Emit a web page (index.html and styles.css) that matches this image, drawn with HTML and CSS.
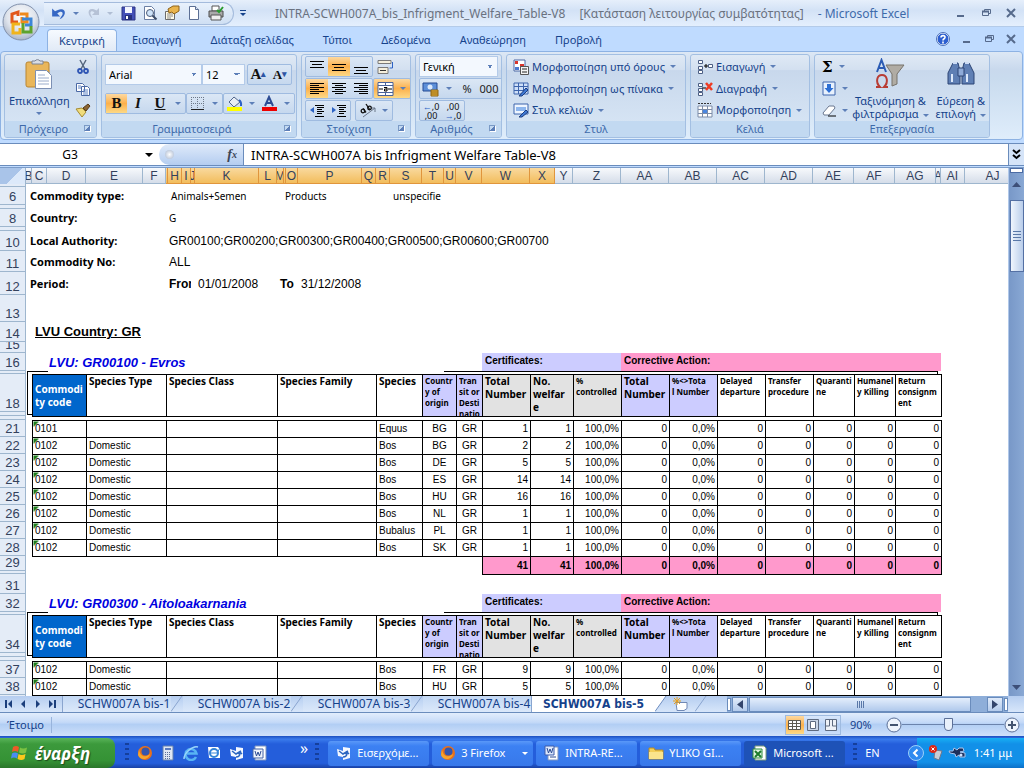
FILE: index.html
```html
<!DOCTYPE html>
<html lang="el">
<head>
<meta charset="utf-8">
<title>INTRA-SCWH007A_bis_Infrigment_Welfare_Table-V8 - Microsoft Excel</title>
<link rel="stylesheet" href="styles.css">
</head>
<body>

<header class="top">
  <button class="office" aria-label="Office">
    <svg width="38" height="38" viewBox="0 0 38 38">
      <defs><radialGradient id="orb" cx="50%" cy="35%" r="65%"><stop offset="0" stop-color="#fff"/><stop offset=".6" stop-color="#dfe4ec"/><stop offset="1" stop-color="#a9b5c8"/></radialGradient></defs>
      <circle cx="19" cy="19" r="18" fill="url(#orb)" stroke="#8291ac"/>
      <g fill="none" stroke-width="3">
        <path d="M16 19H10V11l6-2v4" stroke="#e2581c"/>
        <path d="M18 11h7v8h-5v-5" stroke="#f08a1c"/>
        <path d="M20 16h9v6h-6" stroke="#3d86d6"/>
        <path d="M18 21h-7v9h7v-5" stroke="#f0b41c"/>
        <path d="M21 20v9h8v-6" stroke="#5da32c"/>
      </g>
    </svg>
  </button>

  <div class="titlebar">
    <div class="quick">
      <button aria-label="Αναίρεση"><svg width="16" height="16" viewBox="0 0 14 14"><path d="M1 3v7h7L5.500 7.500C8 5 11 5.500 10 8.500L7.500 12.500C14 10 14 1 5.500 4.500L3.500 5.500z" fill="#3768c4"/></svg></button>
      <i class="dd"></i>
      <button aria-label="Ακύρωση αναίρεσης"><svg width="14" height="14" viewBox="0 0 14 14"><path d="M12 2v7H5l2.500-2.500C5 4.500 3 5 3.500 8L5.500 12.500C0 9 0 1 7.500 3.500L9.500 4.500z" fill="#b6c2d6"/></svg></button>
      <i class="dd pale"></i>
      <button aria-label="Αποθήκευση"><svg width="15" height="15" viewBox="0 0 15 15"><path d="M1 1h13v13H1z" fill="#4450b8" stroke="#2c3484"/><path d="M4 1h7v6H4z" fill="#f4f6ff"/><path d="M4 9h7v5H4z" fill="#26307c"/><path d="M5 10h2v3H5z" fill="#fff"/></svg></button>
      <button aria-label="Προεπισκόπηση"><svg width="16" height="16" viewBox="0 0 16 16"><path d="M2.500 1.500h7l3 3v10h-10z" fill="#fff" stroke="#6b7fa4"/><circle cx="8" cy="8" r="3.500" fill="#cfe4fa" stroke="#4a5a78"/><path d="M10.500 10.500l4 4" stroke="#3c4c68" stroke-width="2"/></svg></button>
      <button aria-label="Ιδιότητες"><svg width="16" height="16" viewBox="0 0 16 16"><path d="M1.500 6.500h9v8h-9z" fill="#fffbe8" stroke="#6b6b6b"/><path d="M3 9h6M3 11h6M3 13h4" stroke="#8b8b8b"/><path d="M4 4l5-3h6v5l-5 3-2-2-3 1z" fill="#e9b44c" stroke="#8f6318"/></svg></button>
      <button aria-label="Δημιουργία"><svg width="16" height="16" viewBox="0 0 16 16"><path d="M3.500 1.500h6l3 3v10h-9z" fill="#fff" stroke="#5c6f94"/><path d="M9.500 1.500v3h3" fill="#dce6f4" stroke="#5c6f94"/></svg></button>
      <button aria-label="Εκτύπωση"><svg width="16" height="16" viewBox="0 0 16 16"><path d="M4 1h7v5H4z" fill="#fff" stroke="#555"/><path d="M1 6h14v6H1z" fill="#a9a9a9" stroke="#4c4c4c"/><path d="M3 10h10v5H3z" fill="#eee" stroke="#555"/><path d="M9 5l2 2 4-5" fill="none" stroke="#2a9b2f" stroke-width="2"/></svg></button>
    </div>
    <button class="more" aria-label="Προσαρμογή"><i class="bar"></i><i class="dd dark"></i></button>
    <h1><span>INTRA-SCWH007A_bis_Infrigment_Welfare_Table-V8</span> <span>[Κατάσταση λειτουργίας συμβατότητας]</span> <b>- Microsoft Excel</b></h1>
    <div class="winbtns">
      <button aria-label="Ελαχιστοποίηση"><svg width="10" height="10"><path d="M1 8h7" stroke="#566a8c" stroke-width="2"/></svg></button>
      <button aria-label="Επαναφορά"><svg width="10" height="10"><path d="M3.500 3V1.500h6v4H8M1.500 3.500h6v4h-6z" fill="none" stroke="#566a8c"/><path d="M1 3.500h7" stroke="#566a8c" stroke-width="2"/></svg></button>
      <button aria-label="Κλείσιμο"><svg width="10" height="10"><path d="M1 1l8 8M9 1L1 9" stroke="#566a8c" stroke-width="2"/></svg></button>
    </div>
  </div>

  <nav class="tabs">
    <button class="tab on">Κεντρική</button>
    <button class="tab">Εισαγωγή</button>
    <button class="tab">Διάταξη σελίδας</button>
    <button class="tab">Τύποι</button>
    <button class="tab">Δεδομένα</button>
    <button class="tab">Αναθεώρηση</button>
    <button class="tab">Προβολή</button>
    <div class="winbtns">
      <button aria-label="Βοήθεια"><svg width="14" height="14" viewBox="0 0 14 14"><circle cx="7" cy="7" r="6" fill="#2d5fd0" stroke="#fff"/><circle cx="7" cy="7" r="6.500" fill="none" stroke="#4a6fb8"/><path d="M5 5.500C5 3 9.500 3 9 5.500 8.800 7 7 6.500 7 8.500M7 9.500v2" fill="none" stroke="#fff" stroke-width="1.600"/></svg></button>
      <button aria-label="Ελαχιστοποίηση"><svg width="10" height="10"><path d="M1 8h7" stroke="#566a8c" stroke-width="2"/></svg></button>
      <button aria-label="Επαναφορά"><svg width="10" height="10"><path d="M3.500 3V1.500h6v4H8M1.500 3.500h6v4h-6z" fill="none" stroke="#566a8c"/><path d="M1 3.500h7" stroke="#566a8c" stroke-width="2"/></svg></button>
      <button aria-label="Κλείσιμο"><svg width="10" height="10"><path d="M1 1l8 8M9 1L1 9" stroke="#566a8c" stroke-width="2"/></svg></button>
    </div>
  </nav>
</header>

<!-- ribbon -->
<section class="ribbon">
  <div class="group g-clip">
    <div class="body">
      <button class="big"><svg width="30" height="32" viewBox="0 0 30 32"><rect x="2" y="4" width="23" height="25" rx="2" fill="#e9b65a" stroke="#b98531"/><path d="M8 6V3h3a3 3 0 0 1 5 0h3v3z" fill="#d9dde4" stroke="#7c8494"/><path d="M11.500 12.500h11l5 5v13h-16z" fill="#fff" stroke="#7c90b4"/><path d="M14 17h7M14 20h11M14 23h11M14 26h11" stroke="#9aaccb"/></svg><span>Επικόλληση</span><i class="dd"></i></button>
      <div class="stack">
        <button aria-label="Αποκοπή"><svg width="14" height="16" viewBox="0 0 14 16"><path d="M4 1l5 9M10 1L5 10" stroke="#56677f" stroke-width="1.500"/><circle cx="4" cy="12" r="2" fill="none" stroke="#2f55b4" stroke-width="1.800"/><circle cx="10" cy="12" r="2" fill="none" stroke="#2f55b4" stroke-width="1.800"/></svg></button>
        <button aria-label="Αντιγραφή"><svg width="16" height="14" viewBox="0 0 16 14"><path d="M1.500 1.500h6l2 2v6h-8zM6.500 4.500h6l2 2v7h-8z" fill="#fff" stroke="#4a68a4"/><path d="M3 4h3M3 6h3M8 8h5M8 10h5M8 12h5" stroke="#5f83c4"/></svg></button>
        <button aria-label="Πινέλο μορφοποίησης"><svg width="16" height="15" viewBox="0 0 16 15"><path d="M1 6l6-1 4 4-4 5z" fill="#f0dc7c" stroke="#a58b32"/><path d="M8 5l5-4 2 2-4 5z" fill="#8a6433" stroke="#573c18"/></svg></button>
      </div>
    </div>
    <h2>Πρόχειρο<i class="launch"></i></h2>
  </div>

  <div class="group g-font">
    <div class="body rows2">
      <div class="line">
        <select class="s-font" aria-label="Γραμματοσειρά"><option>Arial</option></select><select class="s-size" aria-label="Μέγεθος"><option>12</option></select>
        <div class="set push"><button class="serif" aria-label="Αύξηση">A<sup>▴</sup></button><button class="serif small" aria-label="Μείωση">A<sup>▾</sup></button></div>
      </div>
      <div class="line">
        <div class="set"><button class="serif hot">B</button><button class="serif"><em>I</em></button><button class="serif"><u>U</u></button><i class="dd"></i></div>
        <div class="set push"><button aria-label="Περιγράμματα"><svg width="15" height="15"><path d="M1.500 1v13M7.500 1v13M13.500 1v13M1 1.500h13M1 7.500h13" stroke="#6d7888" stroke-dasharray="1 1"/><path d="M1 13.500h13" stroke="#222"/></svg></button><i class="dd"></i></div>
        <div class="set push"><button aria-label="Χρώμα γεμίσματος"><svg width="17" height="17" viewBox="0 0 17 17"><path d="M3 7l5-5 6 5-6 5z" fill="#e8eef6" stroke="#53678c"/><path d="M13 5c3 2 2 4 2 6" stroke="#2d62c4" stroke-width="2" fill="none"/><path d="M1 12h15v4H1z" fill="#ff0"/></svg></button><i class="dd"></i><button aria-label="Χρώμα γραμματοσειράς"><svg width="17" height="17" viewBox="0 0 17 17"><path d="M4 11L8 2l4 9M5.500 8h5" stroke="#2c4c94" stroke-width="2" fill="none"/><path d="M1 12h15v4H1z" fill="#e00"/></svg></button><i class="dd"></i></div>
      </div>
    </div>
    <h2>Γραμματοσειρά<i class="launch"></i></h2>
  </div>

  <div class="group g-align">
    <div class="body rows3">
      <div class="line">
        <div class="set"><button aria-label="Επάνω"><svg width="16" height="16"><path d="M1 2.500h14M3 5.500h10M1 8.500h14" stroke="#000"/></svg></button><button class="hot" aria-label="Μέση"><svg width="16" height="16"><path d="M1 5.500h14M3 8.500h10M1 11.500h14" stroke="#000"/></svg></button><button aria-label="Κάτω"><svg width="16" height="16"><path d="M1 8.500h14M3 11.500h10M1 14.500h14" stroke="#000"/></svg></button></div>
        <button class="near" aria-label="Αναδίπλωση"><svg width="17" height="16" viewBox="0 0 17 16"><path d="M1 1.500h13v3H1zM1 8.500h10v6H1z" fill="#f5efdc" stroke="#7a7a7a"/><path d="M3 11.500h6" stroke="#333"/><path d="M15.500 3v6h-3" fill="none" stroke="#2c62c4"/></svg></button>
      </div>
      <div class="line">
        <div class="set"><button class="hot" aria-label="Αριστερά"><svg width="16" height="16"><path d="M1 2.500h14M1 4.500h9M1 6.500h14M1 8.500h9M1 10.500h14M1 12.500h9" stroke="#000"/></svg></button><button aria-label="Κέντρο"><svg width="16" height="16"><path d="M1 2.500h14M4 4.500h8M1 6.500h14M4 8.500h8M1 10.500h14M4 12.500h8" stroke="#000"/></svg></button><button aria-label="Δεξιά"><svg width="16" height="16"><path d="M1 2.500h14M6 4.500h9M1 6.500h14M6 8.500h9M1 10.500h14M6 12.500h9" stroke="#000"/></svg></button></div>
        <div class="set hot push"><button aria-label="Συγχώνευση"><svg width="17" height="16" viewBox="0 0 17 16"><path d="M1 1.500h15v13H1z" fill="#fff" stroke="#49629a"/><path d="M1 4.500h15M1 11.500h15M8.500 1v3M8.500 12v3" stroke="#49629a"/><path d="M2 8h4M11 8h4" stroke="#000"/><path d="M7 6.500h3v3.500H7.500V8H10" fill="none" stroke="#000"/></svg></button><i class="dd"></i></div>
      </div>
      <div class="line">
        <div class="set"><button aria-label="Μείωση εσοχής"><svg width="16" height="16"><path d="M6 2.500h9M8 4.500h7M8 6.500h5M8 8.500h7M8 10.500h5M6 13.500h9" stroke="#000"/><path d="M5 4L1 7l4 3z" fill="#2c62c4"/></svg></button><button aria-label="Αύξηση εσοχής"><svg width="16" height="16"><path d="M6 2.500h9M8 4.500h7M8 6.500h5M8 8.500h7M8 10.500h5M6 13.500h9" stroke="#000"/><path d="M1 4l4 3-4 3z" fill="#2c62c4"/></svg></button></div>
        <div class="set near"><button aria-label="Προσανατολισμός"><svg width="17" height="16" viewBox="0 0 17 16"><path d="M4 14L16 5m-4 0h4v4" fill="none" stroke="#6b7688"/><g fill="none" stroke="#111" stroke-width="1.300"><circle cx="4" cy="8" r="1.800"/><path d="M4 5.500l3 4"/><path d="M7 1l4 6"/><circle cx="10.500" cy="5" r="1.800"/></g></svg></button><i class="dd"></i></div>
      </div>
    </div>
    <h2>Στοίχιση<i class="launch"></i></h2>
  </div>

  <div class="group g-num">
    <div class="body rows3">
      <div class="line"><select class="s-num" aria-label="Μορφή αριθμού"><option>Γενική</option></select></div>
      <div class="line"><div class="set wide"><button aria-label="Λογιστική"><svg width="18" height="16" viewBox="0 0 18 16"><path d="M1 2h14v8H1z" fill="#5d8fd8" stroke="#244a94"/><circle cx="8" cy="6" r="2.500" fill="#dbe9fb"/><path d="M9 9h7v6H9z" fill="#edb73c" stroke="#8e6413"/><path d="M9 11h7M9 13h7" stroke="#8e6413"/></svg></button><i class="dd"></i><button class="sign">%</button><button class="sign">000</button></div></div>
      <div class="line"><div class="set"><button class="dec" aria-label="Αύξηση δεκαδικών"><span><b>←</b>,0</span><span>,00</span></button><button class="dec" aria-label="Μείωση δεκαδικών"><span>,00</span><span><b>→</b>,0</span></button></div></div>
    </div>
    <h2>Αριθμός<i class="launch"></i></h2>
  </div>

  <div class="group g-style">
    <div class="body list">
      <button class="item"><svg width="16" height="16" viewBox="0 0 16 16"><path d="M1 1h11v11H1z" fill="#fff" stroke="#4c68a4"/><path d="M2 2h3v3H2zM7 5h4v3H7z" fill="#d8342c"/><path d="M2 8h4v3H2z" fill="#4a78d0"/><path d="M7.500 7.500h8v8h-8z" fill="#f4f4f4" stroke="#555"/><path d="M9 10h5M9 13h5" stroke="#222"/></svg>Μορφοποίηση υπό όρους<i class="dd"></i></button>
      <button class="item"><svg width="16" height="16" viewBox="0 0 16 16"><path d="M1 2h14v11H1z" fill="#cfe0f8" stroke="#3d64ac"/><path d="M1 5.500h14M1 9.500h14M5.500 2v11M10.500 2v11" stroke="#3d64ac"/><path d="M6 15l7-8 2 2-6 6z" fill="#3f79d4" stroke="#1c3d80"/></svg>Μορφοποίηση ως πίνακα<i class="dd"></i></button>
      <button class="item"><svg width="16" height="16" viewBox="0 0 16 16"><path d="M1 2h14v10H1z" fill="#eef5ff" stroke="#3d64ac"/><path d="M3 5h10v4H3z" fill="#8db6ee"/><path d="M6 15l7-7 2 2-6 5z" fill="#3f79d4" stroke="#1c3d80"/></svg>Στυλ κελιών<i class="dd"></i></button>
    </div>
    <h2>Στυλ</h2>
  </div>

  <div class="group g-cells">
    <div class="body list">
      <button class="item"><svg width="16" height="16" viewBox="0 0 16 16"><path d="M1.500 1.500h4v3h-4zM1.500 7.500h4v3h-4zM1.500 11.500h4v3h-4zM11.500 5.500h4v3h-4z" fill="#fff" stroke="#4c5f84"/><path d="M7 7h4M9 5v4" stroke="#000"/></svg>Εισαγωγή<i class="dd"></i></button>
      <button class="item"><svg width="16" height="16" viewBox="0 0 16 16"><path d="M1.500 2.500h4v3h-4zM1.500 7.500h4v3h-4zM1.500 11.500h4v3h-4z" fill="#fff" stroke="#4c5f84"/><path d="M5 7h4" stroke="#000"/><path d="M9 2l6 7M15 2L9 9" stroke="#ee3b24" stroke-width="2.500"/></svg>Διαγραφή<i class="dd"></i></button>
      <button class="item"><svg width="16" height="16" viewBox="0 0 16 16"><path d="M1 1.500h13" stroke="#333" stroke-dasharray="2 1"/><path d="M1 4h14v11H1z" fill="#fff" stroke="#7c8ca8"/><path d="M1 7.500h14M1 11.500h14M5.500 4v11M10.500 4v11" stroke="#7c8ca8"/><path d="M6 8h4v3H6z" fill="#4a86e0"/></svg>Μορφοποίηση<i class="dd"></i></button>
    </div>
    <h2>Κελιά</h2>
  </div>

  <div class="group g-edit">
    <div class="body">
      <div class="list">
        <button class="item sigma">Σ<i class="dd"></i></button>
        <button class="item"><svg width="14" height="15" viewBox="0 0 14 15"><path d="M1 1h12v13H1z" fill="#e8f1fd" stroke="#3d64ac"/><path d="M5 3h4v4h2.500L7 12 2.500 7H5z" fill="#2d6fd4"/></svg><i class="dd"></i></button>
        <button class="item"><svg width="14" height="15" viewBox="0 0 14 15"><path d="M1 10l6-7h5l1 2-6 7H2z" fill="#fff" stroke="#6b7890"/><path d="M6 13h8" stroke="#000"/></svg><i class="dd"></i></button>
      </div>
      <button class="big"><svg width="30" height="32" viewBox="0 0 30 32"><path d="M11 7h18l-7 9v10l-5 2V16z" fill="#b0aca4" stroke="#77736b"/><path d="M2 14L6.500 2 11 14M3.500 10h6" fill="none" stroke="#2c5cb4" stroke-width="2"/><path d="M1 29h4c-5-5-3-12 2-12s7 7 2 12h4" fill="none" stroke="#b83c34" stroke-width="2"/></svg><span>Ταξινόμηση &amp;<br>φιλτράρισμα<i class="dd"></i></span></button>
      <button class="big"><svg width="30" height="32" viewBox="0 0 30 32"><g fill="#5f7fb4" stroke="#2c4474"><path d="M7 5h5l2 8v13H2V15zM18 5h5l5 10v11H16V13z"/><path d="M12 10h6v8h-6z" fill="#8eaad8"/></g><path d="M5 16h2v8H5zM20 16h2v8h-2z" fill="#dce8fa"/><path d="M7 5h4M19 5h4" stroke="#cddcf4" stroke-width="2"/></svg><span>Εύρεση &amp;<br>επιλογή<i class="dd"></i></span></button>
    </div>
    <h2>Επεξεργασία</h2>
  </div>
</section>

<div class="formula">
  <input class="namebox" value="G3" aria-label="Πλαίσιο ονόματος">
  <i class="dd black"></i>
  <div class="knob"><i></i><button>f<sub>x</sub></button></div>
  <input class="fx" value="INTRA-SCWH007A bis Infrigment Welfare Table-V8" aria-label="Γραμμή τύπων">
  <button class="expand" aria-label="Ανάπτυξη"><svg width="9" height="11"><path d="M1 1l3.500 3L8 1M1 6l3.500 3L8 6" fill="none" stroke="#000" stroke-width="2"/></svg></button>
</div>

<main class="book">
  <div class="rownums">
    <button class="corner" aria-label="Επιλογή όλων"></button>
    <div class="h3"></div><div class="h18">6</div><div class="h4"></div><div class="h18">8</div><div class="h4"></div><div class="h20">10</div><div class="h21">11</div><div class="h23">12</div><div class="h27">13</div><div class="h20">14</div><div class="h11">15</div>
    <div class="h18">16</div><div class="h3"></div><div class="h38">18</div><div class="h4"></div><div class="h4"></div>
    <div class="h17">21</div><div class="h17">22</div><div class="h17">23</div><div class="h17">24</div><div class="h17">25</div><div class="h17">26</div><div class="h17">27</div><div class="h17">28</div><div class="h15">29</div><div class="h3"></div><div class="h20">31</div>
    <div class="h18">32</div><div class="h3"></div><div class="h38">34</div><div class="h4"></div><div class="h4"></div><div class="h17">37</div><div class="h17">38</div>
  </div>

  <div class="grid">
    <div class="cols">
      <span style="width:6px">B</span><span style="width:15px">C</span><span style="width:39px">D</span><span style="width:57px">E</span><span style="width:23px">F</span><b style="width:2px"></b><b style="width:14px">H</b><b style="width:9px">I</b><b style="width:4px">J</b><b style="width:64px">K</b><b style="width:18px">L</b><b style="width:7px">M</b><b style="width:2px"></b><b style="width:12px">O</b><b style="width:64px">P</b><b style="width:14px">Q</b><b style="width:14px">R</b><b style="width:32px">S</b><b style="width:22px">T</b><b style="width:12px">U</b><b style="width:26px">V</b><b style="width:48px">W</b><b style="width:25px">X</b><span style="width:18px">Y</span><span style="width:48px">Z</span><span style="width:48px">AA</span><span style="width:48px">AB</span><span style="width:48px">AC</span><span style="width:48px">AD</span><span style="width:41px">AE</span><span style="width:41px">AF</span><span style="width:41px">AG</span><span style="width:5px">A</span><span style="width:24px">AI</span><span class="last">AJ</span>
    </div>

    <div class="info">
      <div class="h3"></div>
      <div class="r h18"><b>Commodity type:</b><small class="a">Animals+Semen</small><small class="p">Products</small><small>unspecifie</small></div>
      <div class="h4"></div>
      <div class="r h18"><b>Country:</b><small>G</small></div>
      <div class="h4"></div>
      <div class="r h20"><b>Local Authority:</b><span>GR00100;GR00200;GR00300;GR00400;GR00500;GR00600;GR00700</span></div>
      <div class="r h21"><b>Commodity No:</b><span>ALL</span></div>
      <div class="r h23"><b>Period:</b><strong class="from">From</strong><span class="d">01/01/2008</span><strong class="to">To</strong><span>31/12/2008</span></div>
      <div class="h27"></div>
      <h2 class="h20">LVU Country: GR</h2>
      <div class="h11"></div>
    </div>

    <section class="lvu">
      <div class="band"><h3>LVU: GR00100 - Evros</h3><div class="cert">Certificates:</div><div class="corr">Corrective Action:</div></div>
      <table>
        <colgroup><col class="w54"><col class="w80"><col class="w111"><col class="w99"><col class="w46"><col class="w34"><col class="w26"><col class="w48"><col class="w43"><col class="w48"><col class="w48"><col class="w48"><col class="w48"><col class="w48"><col class="w41"><col class="w41"><col class="w46"></colgroup>
        <thead>
          <tr><th class="blue">Commodi<br>ty code</th><th>Species Type</th><th>Species Class</th><th>Species Family</th><th>Species</th><th class="lilac sm"><div>Countr<br>y of<br>origin</div></th><th class="lilac sm"><div>Tran<br>sit or<br>Desti<br>natio</div></th><th class="grey">Total<br>Number</th><th class="grey">No.<br>welfar<br>e</th><th class="grey sm">%<br>controlled</th><th class="lilac">Total<br>Number</th><th class="lilac sm">%&lt;&gt;Tota<br>l Number</th><th class="sm">Delayed<br>departure</th><th class="sm">Transfer<br>procedure</th><th class="sm">Quaranti<br>ne</th><th class="sm">Humanel<br>y Killing</th><th class="sm">Return<br>consignm<br>ent</th></tr>
        </thead>
        <tbody>
          <tr class="gap"><td colspan="17"></td></tr>
          <tr><td>0101</td><td></td><td></td><td></td><td>Equus</td><td>BG</td><td>GR</td><td>1</td><td>1</td><td>100,0%</td><td>0</td><td>0,0%</td><td>0</td><td>0</td><td>0</td><td>0</td><td>0</td></tr>
          <tr><td>0102</td><td>Domestic</td><td></td><td></td><td>Bos</td><td>BG</td><td>GR</td><td>2</td><td>2</td><td>100,0%</td><td>0</td><td>0,0%</td><td>0</td><td>0</td><td>0</td><td>0</td><td>0</td></tr>
          <tr><td>0102</td><td>Domestic</td><td></td><td></td><td>Bos</td><td>DE</td><td>GR</td><td>5</td><td>5</td><td>100,0%</td><td>0</td><td>0,0%</td><td>0</td><td>0</td><td>0</td><td>0</td><td>0</td></tr>
          <tr><td>0102</td><td>Domestic</td><td></td><td></td><td>Bos</td><td>ES</td><td>GR</td><td>14</td><td>14</td><td>100,0%</td><td>0</td><td>0,0%</td><td>0</td><td>0</td><td>0</td><td>0</td><td>0</td></tr>
          <tr><td>0102</td><td>Domestic</td><td></td><td></td><td>Bos</td><td>HU</td><td>GR</td><td>16</td><td>16</td><td>100,0%</td><td>0</td><td>0,0%</td><td>0</td><td>0</td><td>0</td><td>0</td><td>0</td></tr>
          <tr><td>0102</td><td>Domestic</td><td></td><td></td><td>Bos</td><td>NL</td><td>GR</td><td>1</td><td>1</td><td>100,0%</td><td>0</td><td>0,0%</td><td>0</td><td>0</td><td>0</td><td>0</td><td>0</td></tr>
          <tr><td>0102</td><td>Domestic</td><td></td><td></td><td>Bubalus</td><td>PL</td><td>GR</td><td>1</td><td>1</td><td>100,0%</td><td>0</td><td>0,0%</td><td>0</td><td>0</td><td>0</td><td>0</td><td>0</td></tr>
          <tr><td>0102</td><td>Domestic</td><td></td><td></td><td>Bos</td><td>SK</td><td>GR</td><td>1</td><td>1</td><td>100,0%</td><td>0</td><td>0,0%</td><td>0</td><td>0</td><td>0</td><td>0</td><td>0</td></tr>
        </tbody>
        <tfoot>
          <tr><td class="none" colspan="7"></td><td>41</td><td>41</td><td>100,0%</td><td>0</td><td>0,0%</td><td>0</td><td>0</td><td>0</td><td>0</td><td>0</td></tr>
        </tfoot>
      </table>
    </section>

    <section class="lvu">
      <div class="band"><h3>LVU: GR00300 - Aitoloakarnania</h3><div class="cert">Certificates:</div><div class="corr">Corrective Action:</div></div>
      <table>
        <colgroup><col class="w54"><col class="w80"><col class="w111"><col class="w99"><col class="w46"><col class="w34"><col class="w26"><col class="w48"><col class="w43"><col class="w48"><col class="w48"><col class="w48"><col class="w48"><col class="w48"><col class="w41"><col class="w41"><col class="w46"></colgroup>
        <thead>
          <tr><th class="blue">Commodi<br>ty code</th><th>Species Type</th><th>Species Class</th><th>Species Family</th><th>Species</th><th class="lilac sm"><div>Countr<br>y of<br>origin</div></th><th class="lilac sm"><div>Tran<br>sit or<br>Desti<br>natio</div></th><th class="grey">Total<br>Number</th><th class="grey">No.<br>welfar<br>e</th><th class="grey sm">%<br>controlled</th><th class="lilac">Total<br>Number</th><th class="lilac sm">%&lt;&gt;Tota<br>l Number</th><th class="sm">Delayed<br>departure</th><th class="sm">Transfer<br>procedure</th><th class="sm">Quaranti<br>ne</th><th class="sm">Humanel<br>y Killing</th><th class="sm">Return<br>consignm<br>ent</th></tr>
        </thead>
        <tbody>
          <tr class="gap"><td colspan="17"></td></tr>
          <tr><td>0102</td><td>Domestic</td><td></td><td></td><td>Bos</td><td>FR</td><td>GR</td><td>9</td><td>9</td><td>100,0%</td><td>0</td><td>0,0%</td><td>0</td><td>0</td><td>0</td><td>0</td><td>0</td></tr>
          <tr><td>0102</td><td>Domestic</td><td></td><td></td><td>Bos</td><td>HU</td><td>GR</td><td>5</td><td>5</td><td>100,0%</td><td>0</td><td>0,0%</td><td>0</td><td>0</td><td>0</td><td>0</td><td>0</td></tr>
        </tbody>
      </table>
    </section>
  </div>

  <div class="vscroll">
    <i class="split"></i>
    <button aria-label="Πάνω"><svg width="9" height="5"><path d="M0 5l4.500-5L9 5z" fill="#3d4f78"/></svg></button>
    <div class="thumb"></div>
    <button class="down" aria-label="Κάτω"><svg width="9" height="5"><path d="M0 0l4.500 5L9 0z" fill="#3d4f78"/></svg></button>
  </div>
</main>

<div class="sheetbar">
  <div class="nav">
    <button aria-label="Πρώτο"><svg width="8" height="8"><path d="M1 0v8" stroke="#1c3f7c" stroke-width="2"/><path d="M7 0v8L3 4z" fill="#1c3f7c"/></svg></button>
    <button aria-label="Προηγούμενο"><svg width="8" height="8"><path d="M6 0v8L2 4z" fill="#1c3f7c"/></svg></button>
    <button aria-label="Επόμενο"><svg width="8" height="8"><path d="M2 0v8l4-4z" fill="#1c3f7c"/></svg></button>
    <button aria-label="Τελευταίο"><svg width="8" height="8"><path d="M7 0v8" stroke="#1c3f7c" stroke-width="2"/><path d="M1 0v8l4-4z" fill="#1c3f7c"/></svg></button>
  </div>
  <button class="sheet">SCHW007A bis-1</button>
  <svg class="slant" width="12" height="16"><path d="M0 15.500L11 0" stroke="#8aa5cf" fill="none"/></svg>
  <button class="sheet">SCHW007A bis-2</button>
  <svg class="slant" width="12" height="16"><path d="M0 15.500L11 0" stroke="#8aa5cf" fill="none"/></svg>
  <button class="sheet">SCHW007A bis-3</button>
  <svg class="slant" width="12" height="16"><path d="M0 15.500L11 0" stroke="#8aa5cf" fill="none"/></svg>
  <button class="sheet">SCHW007A bis-4</button>
  <button class="sheet on">SCHW007A bis-5</button>
  <svg class="slant" width="12" height="16"><path d="M0 0h11L0 16z" fill="#fff"/><path d="M0 15.500L11 0" stroke="#6b8cc0" fill="none"/></svg>
  <button class="new" aria-label="Εισαγωγή φύλλου"><svg width="18" height="14" viewBox="0 0 18 14"><path d="M4 5.500h11v6l-3 2H5z" fill="#fff" stroke="#7088b4"/><path d="M5 0v8M1 4h8M2 1l6 6M8 1L2 7" stroke="#e8a01c"/></svg></button>
  <svg class="slant" width="12" height="16"><path d="M0 15.500L11 0" stroke="#8aa5cf" fill="none"/></svg>
  <div class="hscroll">
    <i class="grip"></i>
    <button aria-label="Αριστερά"><svg width="6" height="9"><path d="M6 0v9L0 4.500z" fill="#33456c"/></svg></button>
    <div class="track"><div class="thumb"></div></div>
    <button aria-label="Δεξιά"><svg width="6" height="9"><path d="M0 0v9l6-4.500z" fill="#33456c"/></svg></button>
    <i class="grip"></i>
  </div>
</div>

<footer class="status">
  <span class="ready">Έτοιμο</span>
  <div class="views">
    <button class="hot" aria-label="Κανονική"><svg width="14" height="12"><path d="M.5 1.500h12v9H.5zM.5 4.500h12M.5 7.500h12M4.500 1.500v9M8.500 1.500v9" fill="#fff" stroke="#5d5a50"/></svg></button>
    <button aria-label="Διάταξη σελίδας"><svg width="14" height="12"><path d="M1.500.5h11v11h-11z" fill="#c8d4e6" stroke="#5d6a80"/><path d="M4.500 2.500h5v7h-5z" fill="#fff" stroke="#5d6a80"/></svg></button>
    <button aria-label="Αλλαγές σελίδων"><svg width="14" height="12"><path d="M1.500.5h11v11h-11z" fill="#eef2f8" stroke="#5d6a80"/><path d="M5.500 0v7h-4M8.500 0v7h4" fill="none" stroke="#5d6a80"/></svg></button>
  </div>
  <label for="zoom">90%</label>
  <button class="round" aria-label="Σμίκρυνση"><svg width="16" height="16"><circle cx="8" cy="8" r="7" fill="#eef4fc" stroke="#5c7098"/><path d="M4 8h8" stroke="#44546f" stroke-width="2"/></svg></button>
  <input id="zoom" type="range" min="0" max="100" value="45">
  <button class="round" aria-label="Μεγέθυνση"><svg width="16" height="16"><circle cx="8" cy="8" r="7" fill="#eef4fc" stroke="#5c7098"/><path d="M4 8h8M8 4v8" stroke="#44546f" stroke-width="2"/></svg></button>
</footer>

<nav class="taskbar">
  <button class="start"><svg width="18" height="18" viewBox="0 0 18 18"><path d="M2 3q3-2 6 0L7 8q-3-2-6 0z" fill="#ee5a28"/><path d="M9 3.500q3 2 7 0l-1 5q-3 2-7 0z" fill="#7cc242"/><path d="M1 9.500q3-2 6 0l-1 5q-3-2-6 0z" fill="#4a8cf0"/><path d="M7.500 10q3 2 7 0l-1 5q-3 2-7 0z" fill="#fcc81c"/></svg>έναρξη</button>
  <i class="dots"></i>
  <div class="launchers">
    <button aria-label="Firefox"><svg width="16" height="16" viewBox="0 0 16 16"><circle cx="8" cy="8" r="7" fill="#e8701c"/><circle cx="8.500" cy="6.500" r="4" fill="#3656ac"/><path d="M2 4c1 8 6 9 11 5-1 6-10 7-12 1z" fill="#f6a52c"/></svg></button>
    <button aria-label="Αριθμομηχανή"><svg width="16" height="16" viewBox="0 0 16 16"><path d="M3 1h10v14H3z" fill="#dfe7f4" stroke="#6480ac"/><path d="M5 3h6v2H5z" fill="#5c7cc0"/><path d="M5 7.500h6M5 9.500h6M5 11.500h6M5 13.500h6" stroke="#5a6f98" stroke-dasharray="1 1"/></svg></button>
    <button aria-label="Internet Explorer"><svg width="16" height="16" viewBox="0 0 16 16"><path d="M13 12A5.500 5.500 0 1 1 13.500 8.500H4" fill="none" stroke="#58b4f4" stroke-width="2.500"/><path d="M1 14C1 8 10 0 15 2" fill="none" stroke="#9ad4fa" stroke-width="1.500"/></svg></button>
    <button aria-label="Outlook Express"><svg width="16" height="16" viewBox="0 0 16 16"><path d="M2 2h10l2 3v8H3z" fill="#fff"/><circle cx="8" cy="8" r="4" fill="none" stroke="#3484d8" stroke-width="2"/><path d="M5 8h6l3-5" stroke="#3484d8" fill="none"/></svg></button>
    <button aria-label="Outlook"><svg width="16" height="16" viewBox="0 0 16 16"><path d="M1 4l6 2V2l7 1v10l-7 2v-3l-5-1z" fill="#f4f8ff"/><path d="M3 6l4 3 5-3M7 12c3 0 4-2 4-4M9 9l2-2 2 2" stroke="#2c66c0" stroke-width="1.500" fill="none"/></svg></button>
    <button aria-label="Word"><svg width="16" height="16" viewBox="0 0 16 16"><path d="M3 1h11v14H3z" fill="#fff" stroke="#7c94c0"/><path d="M1 4h10v9H1z" fill="#f0f4fc" stroke="#4464a8"/><path d="M3 6l1.500 5L6 7l1.500 4L9 6" fill="none" stroke="#2c4c94"/></svg></button>
  </div>
  <span class="chev">»</span>
  <i class="dots"></i>
  <button class="task"><svg width="16" height="16" viewBox="0 0 16 16"><path d="M1 4l6 2V2l7 1v10l-7 2v-3l-5-1z" fill="#f4f8ff"/><path d="M3 6l4 3 5-3M7 12c3 0 4-2 4-4M9 9l2-2 2 2" stroke="#2c66c0" stroke-width="1.500" fill="none"/></svg>Εισερχόμε...</button>
  <button class="task"><svg width="16" height="16" viewBox="0 0 16 16"><circle cx="8" cy="8" r="7" fill="#e8701c"/><circle cx="8.500" cy="6.500" r="4" fill="#3656ac"/><path d="M2 4c1 8 6 9 11 5-1 6-10 7-12 1z" fill="#f6a52c"/></svg>3 Firefox<i class="dd white"></i></button>
  <button class="task"><svg width="16" height="16" viewBox="0 0 16 16"><path d="M4 2h10v13H4z" fill="#fff" stroke="#7c94c0"/><path d="M1 1h9v9H1z" fill="#dce8fc" stroke="#3c5cac"/><path d="M3 3l1.500 5L6 4l1.500 4L9 3M6 12h6" fill="none" stroke="#2c4c94"/></svg>INTRA-RE...</button>
  <button class="task"><svg width="16" height="16" viewBox="0 0 16 16"><path d="M1 3h5l1 2h8v9H1z" fill="#f4cf58" stroke="#b48a24"/><path d="M1 7h14v7H1z" fill="#fbe48c"/></svg>YLIKO GI...</button>
  <button class="task on"><svg width="16" height="16" viewBox="0 0 16 16"><path d="M3 1h9l2 2v12H3z" fill="#fff" stroke="#7a9c7a"/><path d="M1 4h9v9H1z" fill="#e2f4e2" stroke="#2c8c3c"/><path d="M3 6l6 6M9 6l-6 6" stroke="#1c7c2c" stroke-width="2"/></svg>Microsoft ...</button>
  <i class="dots"></i>
  <span class="lang">EN</span>
  <div class="tray">
    <button aria-label="Εμφάνιση κρυφών"><svg width="16" height="16"><circle cx="8" cy="8" r="7.500" fill="#2f8af0" stroke="#9cd0fa"/><path d="M9.500 4.500L6 8l3.500 3.500" fill="none" stroke="#fff" stroke-width="2"/></svg></button>
    <svg width="16" height="16" viewBox="0 0 16 16"><path d="M7 5l7 1-3 9-5-2z" fill="#c8ccd4" stroke="#70788c"/><circle cx="5" cy="4" r="4" fill="#dc2818"/><path d="M3.500 2.500l3 3M6.500 2.500l-3 3" stroke="#fff"/></svg>
    <svg width="18" height="14" viewBox="0 0 18 14"><path d="M1 5h4l1-3 3 2 2-2h4l1 3-4 1 5 1v4h-5l-1-2-3 2-1-3-5-1z" fill="#1c2f5c" stroke="#a8c4ec"/><circle cx="13" cy="9" r="1.500" fill="#cfe2ff"/></svg>
    <time>1:41 μμ</time>
  </div>
</nav>

</body>
</html>
```
FILE: styles.css
```css
* { box-sizing: border-box; }

html, body { height: 100%; }

body {
	margin: 0;
	display: flex;
	flex-direction: column;
	overflow: hidden;
	font: 12px/16px "Noto Sans", "Open Sans", sans-serif;
	color: #15428b;
	background: #bfdbff;
}

button {
	font: inherit;
	color: inherit;
	background: none;
	border: 0;
	padding: 0;
	display: flex;
	align-items: center;
	justify-content: center;
	white-space: nowrap;
}
svg { display: block; flex: none; }
h1, h2, h3 { margin: 0; font: inherit; }
input, select { font: inherit; margin: 0; border-radius: 0; }

/* little drop-down arrow */
.dd {
	flex: none;
	border: 3px solid transparent;
	border-top-color: #5d7fb8;
	border-bottom: 0;
	margin: 0 4px;
}
.dd.pale { border-top-color: #b0bed4; }
.dd.dark { border-top-color: #15428b; margin: 0; }
.dd.white { border-top-color: #fff; margin: 0 0 0 auto; }
.dd.black { border-width: 4px 4px 0; border-top-color: #000; margin: 0 6px 0 0; }

/* title bar and tabs */
.top { position: relative; }
.office { position: absolute; left: 2px; top: 3px; z-index: 2; }
.titlebar {
	height: 27px;
	display: flex;
	align-items: center;
	padding: 0 8px 0 44px;
	background: linear-gradient(#e6effb, #d3e2f6 40%, #e4effd);
	border-bottom: 1px solid #b4cbe9;
}
.quick {
	display: flex;
	align-items: center;
	height: 23px;
	gap: 6px;
	padding: 0 9px 0 7px;
	border: 1px solid #a4bbdc;
	border-left: 0;
	border-radius: 0 12px 12px 0;
	background: linear-gradient(#e8f1fc, #cfdff3);
}
.quick .dd { margin: 0 2px 0 0; }
.more { flex-direction: column; gap: 2px; margin: 0 29px 0 6px; }
.more .bar { width: 6px; height: 1px; background: #15428b; }
.titlebar h1 { flex: 1; display: flex; gap: 14px; color: #6a7280; white-space: nowrap; padding-top: 2px; }
.titlebar h1 b { font-weight: normal; color: #3e6aaa; }
.winbtns { display: flex; gap: 15px; }

.tabs {
	display: flex;
	height: 24px;
	padding: 0 8px 0 47px;
	font-size: 11px;
}
.tab { padding: 0 14px 0 15px; margin-top: 2px; }
.tab.on {
	padding: 0;
	border: 1px solid #8db2e3;
	border-bottom: 0;
	border-radius: 4px 4px 0 0;
	background: linear-gradient(#f6faff, #e1eaf6);
	width: 70px;
}
.tabs .winbtns { margin-left: auto; align-items: center; gap: 12px; }

/* ribbon */
.ribbon {
	display: flex;
	gap: 4px;
	margin: 0 1px 0 0;
	padding: 2px 3px;
	height: 89px;
	border: 1px solid #8db2e3;
	border-radius: 4px;
	background: linear-gradient(#dde8f5, #c9d9ed 20%, #c9dbee 30%, #dfedfb);
	font-size: 11px;
}
.group {
	display: flex;
	flex-direction: column;
	height: 84px;
	border: 1px solid #a3bfe2;
	border-radius: 3px;
	overflow: hidden;
	background: linear-gradient(#dfe9f5, #d3e0f0 18%, #c8d8ec 19%, #d9e7f6);
}
.group h2 {
	position: relative;
	height: 16px;
	line-height: 15px;
	text-align: center;
	color: #3e6aaa;
	background: #c2d9f1;
}
.g-clip { width: 93px; }
.g-font { width: 196px; }
.g-align { width: 110px; }
.g-num { width: 87px; }
.g-style { width: 180px; }
.g-cells { width: 120px; }
.g-edit { width: 176px; }
.g-clip h2, .g-font h2, .g-align h2, .g-num h2 { padding-right: 14px; }
.launch {
	position: absolute;
	right: 5px;
	top: 4px;
	width: 7px;
	height: 7px;
	border: 1px solid #7a9ac6;
	border-right-color: #fff;
	border-bottom-color: #fff;
	background: linear-gradient(135deg, transparent 45%, #5d7fb8 46%);
}
.body { flex: 1; display: flex; min-height: 0; }
.big { flex-direction: column; justify-content: flex-start; padding: 3px 3px 0 4px; }
.big span { line-height: 13px; padding-top: 4px; }
.big .dd { display: inline-block; vertical-align: middle; margin: 0 0 0 4px; }
.g-clip .big .dd { margin: 5px 0 0; }
.stack { display: flex; flex-direction: column; justify-content: space-around; padding-left: 2px; }
.rows2 { flex-direction: column; gap: 8px; padding: 9px 4px 0 3px; }
.rows3 { flex-direction: column; gap: 1px; padding: 1px 3px 0; }
.line { display: flex; height: 21px; align-items: stretch; }
.push { margin-left: auto; }
.near { margin-left: 4px; }
.set {
	display: flex;
	align-items: center;
	border: 1px solid #9fbbe0;
	border-radius: 2px;
	background: linear-gradient(#dbe7f5, #c6d8ee);
}
.set button { height: 100%; min-width: 22px; }
.set.wide { flex: 1; justify-content: space-between; padding-right: 3px; }
.hot, .set.hot { background: linear-gradient(#fdd9a0, #fcb04c 50%, #fdd986); }
.sign { color: #222; }
.serif { font: bold 15px "Liberation Serif", serif; color: #111; }
.serif.small { font-size: 13px; }
.serif sup { font-size: 9px; line-height: 9px; color: #2d55a4; vertical-align: 7px; }
.g-font .set button { min-width: 21px; }
.g-font .set button + button { min-width: 22px; }
.g-font .dd { margin: 0 4px; }
.dec { flex-direction: column; font-size: 9px; line-height: 9px; color: #111; }
.dec b { color: #2c62c4; }

select {
	appearance: none;
	border: 1px solid #b4cbe9;
	color: #000;
	padding: 0 3px;
	background:
		linear-gradient(45deg, transparent 50%, #5d7fb8 50%) right 7px center / 3px 3px no-repeat,
		linear-gradient(-45deg, transparent 50%, #5d7fb8 50%) right 4px center / 3px 3px no-repeat,
		#f3f8fe;
}
.s-font { width: 97px; }
.s-size { width: 43px; }
.s-num { width: 79px; }

.list { display: flex; flex-direction: column; padding: 1px 4px 0 6px; }
.item { height: 22px; gap: 3px; justify-content: flex-start; }
.item .dd { margin: 0 0 0 2px; }
.g-edit .list { width: 34px; padding: 1px 0 0 7px; }
.g-edit .item { gap: 4px; }
.sigma { font: bold 15px "DejaVu Serif", serif; color: #000; }

/* formula bar */
.formula {
	display: flex;
	align-items: center;
	height: 23px;
	margin-top: 3px;
	border: solid #6a8cbc;
	border-width: 1px 0;
	background: #fff;
	font-size: 13px;
}
.namebox { width: 148px; flex: none; border: 0; text-align: center; font-size: 12px; padding: 0 8px 0 0; }
.formula .dd { margin-left: -3px; }
.knob {
	display: flex;
	align-items: center;
	justify-content: space-between;
	width: 85px;
	height: 21px;
	padding: 0 6px;
	border-right: 1px solid #6a8cbc;
	border-radius: 11px 0 0 11px;
	background: linear-gradient(#dfeafa, #b4cdf0);
}
.knob i { width: 9px; height: 9px; border-radius: 50%; background: radial-gradient(#fff, #a5b4cc); }
.knob button { font: italic bold 14px "Liberation Serif", serif; color: #3c4658; }
.knob sub { font-size: 10px; }
.fx { flex: 1; border: 0; padding: 0 7px; color: #000; }
.expand { width: 16px; height: 21px; border-left: 1px solid #6a8cbc; background: #d5e4f8; }

/* worksheet */
.book {
	flex: 1;
	min-height: 0;
	display: flex;
	margin-top: 1px;
	border-top: 1px solid #7c9cc8;
	background: #fff;
	font-family: "Liberation Sans", Arial, sans-serif;
	color: #000;
}
.rownums {
	width: 26px;
	flex: none;
	overflow: hidden;
	border-right: 1px solid #9eb6ce;
	background: #e4ecf7;
	color: #33415c;
	font-size: 13px;
}
.rownums div {
	display: flex;
	align-items: flex-end;
	justify-content: center;
	overflow: hidden;
	line-height: 14px;
	border-bottom: 1px solid #9eb6ce;
}
.corner { width: 100%; height: 16px; background: linear-gradient(135deg, #a9c4e9 55%, #dce9fa 56%); }
.h3 { height: 3px; }
.h4 { height: 4px; }
.h11 { height: 11px; }
.h15 { height: 15px; }
.h17 { height: 17px; }
.h18 { height: 18px; }
.h20 { height: 20px; }
.h21 { height: 21px; }
.h23 { height: 23px; }
.h27 { height: 27px; }
.h38 { height: 38px; }

.grid { flex: 1; min-width: 0; overflow: hidden; }
.cols { display: flex; height: 16px; color: #33415c; line-height: 16px; }
.cols span, .cols b {
	flex: none;
	overflow: hidden;
	display: flex;
	justify-content: center;
	font-weight: normal;
	border-right: 1px solid #9eb6ce;
	background: linear-gradient(#f7f9fc, #d5dde9);
	border-bottom: 1px solid #9eb6ce;
}
.cols b { border-color: #e0953c; background: linear-gradient(#f9d99f, #f2bd5c); }
.cols .last { flex: 1; min-width: 43px; padding-left: 12px; border-right: 0; }

.r { display: flex; align-items: center; white-space: nowrap; }
.r b { width: 139px; margin-left: 4px; font-family: "Noto Sans", sans-serif; font-size: 11px; }
.r b + * { flex: none; }
.r small { font: 10px/14px "Noto Sans", sans-serif; }
.r .a { width: 114px; padding-left: 2px; }
.r .p { width: 110px; padding-left: 2px; }
.from { width: 22px; overflow: hidden; }
.d { width: 89px; padding-left: 7px; }
.to { width: 21px; }
.info h2 { font-size: 13px; font-weight: bold; line-height: 20px; padding-left: 9px; text-decoration: underline; }

.lvu { position: relative; margin-bottom: 19px; }
.lvu::before, .lvu::after { content: ""; position: absolute; top: 18px; border: 1px solid #000; }
.lvu::before { left: 1px; width: 20px; height: 42px; border-right: 0; }
.lvu::after { left: 418px; width: 493px; height: 4px; border-left: 0; border-bottom: 0; }
.band { display: flex; height: 18px; margin-bottom: 3px; font: bold 10px/15px "Liberation Sans", sans-serif; }
.band h3 { width: 456px; padding-left: 23px; font: italic bold 13px/20px "Liberation Sans", sans-serif; color: #0000e0; }
.cert { width: 139px; padding-left: 3px; background: #ccf; }
.corr { width: 320px; padding-left: 3px; background: #f9c; }

table {
	position: relative;
	z-index: 1;
	table-layout: fixed;
	width: 910px;
	margin-left: 6px;
	border-collapse: collapse;
	background: #fff;
	font-size: 10px;
	line-height: 14px;
}
.w26 { width: 26px; }
.w34 { width: 34px; }
.w41 { width: 41px; }
.w43 { width: 43px; }
.w46 { width: 46px; }
.w48 { width: 48px; }
.w54 { width: 54px; }
.w80 { width: 80px; }
.w99 { width: 99px; }
.w111 { width: 111px; }
th, td { border: 1px solid #000; padding: 0 2px; white-space: nowrap; }
th {
	height: 42px;
	overflow: hidden;
	vertical-align: top;
	text-align: left;
	font: bold 10px/13px "Noto Sans", sans-serif;
}
th.sm { font-size: 8px; line-height: 11px; }
th div { height: 41px; overflow: hidden; }
.blue { background: #06c; color: #fff; vertical-align: middle; }
.lilac { background: #ccf; }
.grey { background: #e2e2e2; }
td { height: 17px; text-align: right; }
tbody td:nth-child(-n+5) { text-align: left; }
tbody td:nth-child(6), tbody td:nth-child(7) { text-align: center; }
tbody tr:not(.gap) td:first-child { background: linear-gradient(135deg, #1c7c1c 4px, transparent 4px); }
.gap td { height: 4px; border-left: 0; border-right: 0; line-height: 0; padding: 0; }
tfoot td { height: 18px; background: #f9c; font-weight: bold; }
tfoot .none { background: #fff; border-left: 0; border-bottom: 0; }

.vscroll {
	width: 16px;
	flex: none;
	display: flex;
	flex-direction: column;
	align-items: center;
	border-left: 1px solid #b0c8ea;
	background: linear-gradient(90deg, #7898c8, #89a8d4);
}
.split { width: 13px; height: 5px; border: 1px solid #4c6ca4; background: #fff; }
.vscroll button { width: 100%; height: 22px; }
.vscroll .thumb {
	width: 14px;
	height: 72px;
	margin-top: 5px;
	border: 1px solid #5470a4;
	background:
		repeating-linear-gradient(#5a78a8 0 1px, transparent 1px 3px) center / 8px 10px no-repeat,
		linear-gradient(90deg, #eff5fd, #b9cdea);
}
.vscroll .down { margin-top: auto; height: 18px; }

/* sheet tabs */
.sheetbar {
	display: flex;
	height: 17px;
	border-bottom: 1px solid #6a8cbc;
	background: linear-gradient(#b5cdf0, #d7e6fa);
}
.nav { width: 63px; display: flex; justify-content: space-between; padding: 0 6px 0 5px; border-right: 1px solid #8aa5cf; }
.sheet { width: 108px; padding-left: 14px; background: linear-gradient(#c3d8f4, #dbe8fa); }
.sheet.on {
	width: 124px;
	padding: 0;
	border-left: 1px solid #8aa5cf;
	background: #fff;
	font: bold 12px/16px "DejaVu Sans Condensed", "DejaVu Sans", sans-serif;
}
.new { width: 28px; }
.hscroll { flex: 1; display: flex; align-items: center; gap: 1px; margin: 0 16px 0 20px; background: #8eaed9; }
.hscroll button { width: 16px; height: 15px; border: 1px solid #6a8cbc; background: linear-gradient(#e0ebfa, #b4cbec); }
.grip { width: 4px; height: 13px; background: #fff; border: 1px solid #6a8cbc; }
.track { flex: 1; padding-right: 15px; }
.hscroll .thumb {
	height: 15px;
	border: 1px solid #6a8cbc;
	background:
		repeating-linear-gradient(90deg, #5a78a8 0 1px, transparent 1px 2px) center / 7px 7px no-repeat,
		linear-gradient(#e4eefc, #b0c9ec);
}

/* status bar */
.status {
	display: flex;
	align-items: center;
	height: 23px;
	padding: 0 4px 0 7px;
	background: linear-gradient(#e2edfc, #c5daf8 40%, #b2cef4 50%, #cfe1fa);
}
.ready { width: 45px; font-size: 11px; border-right: 1px solid #98b4dc; }
.views { display: flex; margin-left: auto; border: 1px solid #9fbbe0; }
.views button { width: 18px; height: 18px; }
.status label { margin: 0 13px 0 9px; width: 23px; font-size: 11px; }
#zoom {
	width: 102px;
	min-width: 0;
	height: 16px;
	appearance: none;
	background: linear-gradient(#6b83ac, #6b83ac) center / 100% 1px no-repeat;
}
#zoom::-webkit-slider-thumb {
	appearance: none;
	width: 9px;
	height: 13px;
	border: 1px solid #5c7098;
	border-radius: 1px 1px 5px 5px;
	background: #e8f0fb;
}

/* taskbar */
.taskbar {
	display: flex;
	align-items: center;
	height: 32px;
	padding-top: 2px;
	background: linear-gradient(#1c4fc0, #3a7bec 10%, #245edb 25%, #245edb 85%, #1941a5);
	color: #fff;
	font-size: 11px;
}
.start {
	width: 115px;
	height: 30px;
	gap: 6px;
	padding-right: 14px;
	border-radius: 0 8px 8px 0;
	background: linear-gradient(#5ab45a, #3c9a3c 20%, #359235 75%, #2a762a);
	font: italic bold 17px "Noto Sans", sans-serif;
	text-shadow: 1px 1px 1px #1c4c1c;
}
.dots { width: 4px; height: 20px; margin-left: 10px; background: repeating-linear-gradient(#153f9c 0 2px, transparent 2px 5px); }
.launchers { display: flex; gap: 7px; margin: 0 0 0 8px; }
.chev { margin-left: 32px; font-size: 16px; line-height: 12px; padding-bottom: 10px; }
.chev + .dots { margin: 0 9px 0 7px; }
.task {
	flex: 0 1 101px;
	height: 25px;
	justify-content: flex-start;
	gap: 5px;
	padding: 0 5px 0 8px;
	margin-right: 3px;
	border-radius: 3px;
	background: linear-gradient(#5a98f8, #3c81f3 20%, #3878ea);
	overflow: hidden;
}
.task.on { background: #1e52b7; }
.task.on + .dots { margin-left: 5px; }
.lang { margin: 0 21px 0 8px; }
.tray {
	flex: 1;
	display: flex;
	align-items: center;
	gap: 4px;
	height: 30px;
	margin-left: 16px;
	background: linear-gradient(#18b0f4, #1290e8 20%, #1290e8 80%, #0c70c8);
}
.tray button { margin-left: -9px; }
.tray time { margin-left: 4px; }
```
